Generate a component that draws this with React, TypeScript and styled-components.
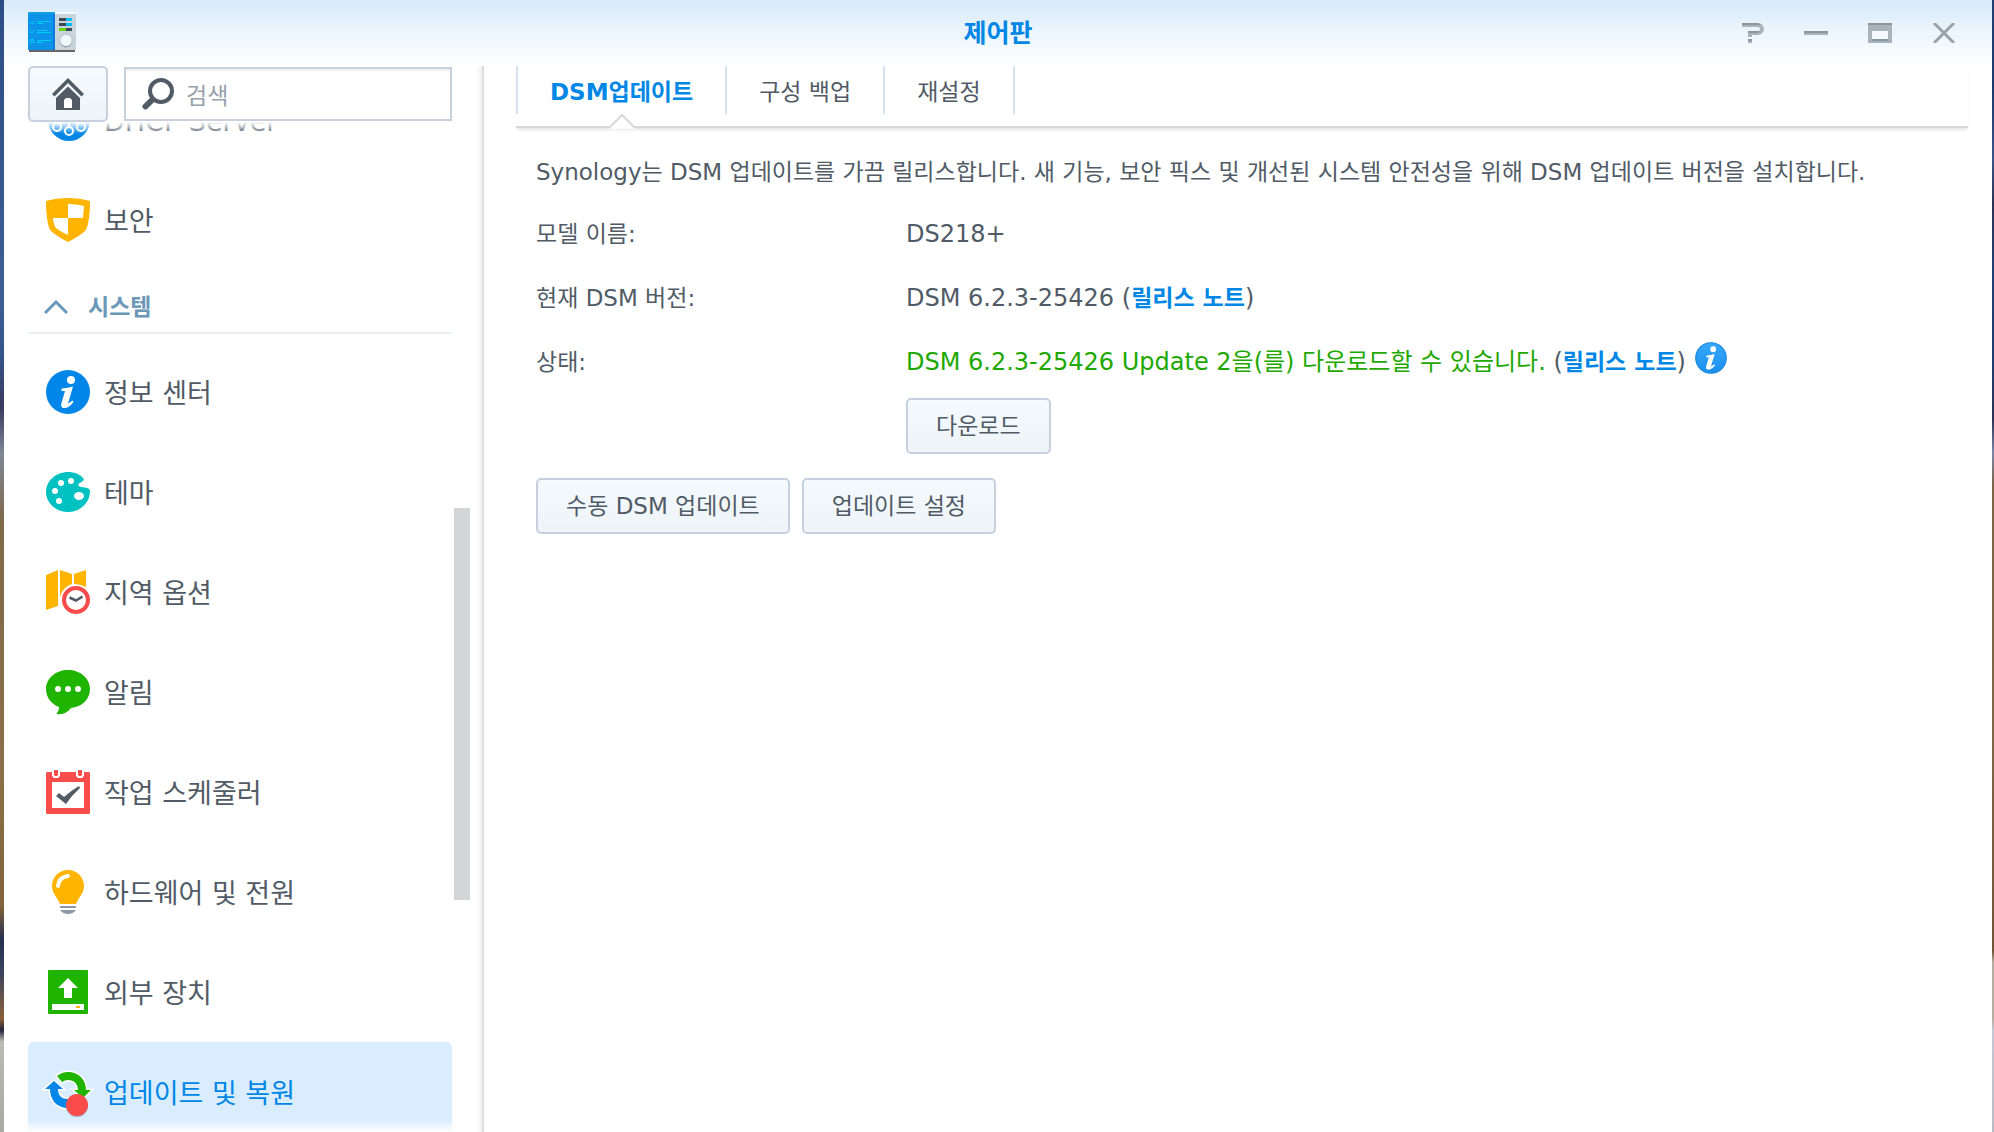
import React from 'react';
import styled, { createGlobalStyle, css } from 'styled-components';

const color = {
  text: '#505b66',
  blue: '#0086e5',
  green: '#1ea800',
  border: '#c6d1dd',
  tabLine: '#d7e1eb',
  group: '#6b97b8',
  amber: '#ffb400',
  red: '#fb4c4c',
  leaf: '#1fb400',
};

const GlobalStyle = createGlobalStyle`
  * { box-sizing: border-box; }
  body {
    margin: 0;
    color: ${color.text};
    font: 23px/32px "DejaVu Sans", "Noto Sans CJK KR", sans-serif;
  }
  button, input { font: inherit; color: inherit; }
`;

const Desktop = styled.div`
  display: flex;
  height: 100vh;
  padding: 0 2px 0 4px;
  overflow: hidden;
  background:
    linear-gradient(#213f70 0%, #1c3a6c 8%, #3a5488 14%, #2c3352 18%, #1f4072 24%, #1f3d6e 32%, #2c3352 37%,
      #7c86a8 40%, #7a6244 43%, #7d6547 65%, #6f5636 84%, #b4aea2 85%, #b4aea2 90%, #c5c8d4 91%, #b8bac4 100%)
      right / 2px 100% no-repeat,
    linear-gradient(#2c4d85 0%, #3c5f96 26%, #34568c 31%, #3b3a60 36%, #7d8796 40%, #80694b 46%,
      #8a7048 68%, #84643a 80%, #253052 83%, #3c4560 86%, #8a5f35 90%, #23233c 91%, #b9bbb4 92%, #a9aaa2 100%);
`;

const Window = styled.section`
  flex: 1;
  min-width: 0;
  display: flex;
  flex-direction: column;
  background: linear-gradient(#d7eaf8 0, #e9f4fd 28px, #fff 66px);
`;

const TitleBar = styled.header`
  display: grid;
  grid-template-columns: 1fr auto 1fr;
  align-items: center;
  height: 66px;
  padding: 0 24px;
`;

const Title = styled.h1`
  margin: 0;
  padding-top: 2px;
  color: ${color.blue};
  font-size: 25px;
  line-height: 32px;
`;

const WindowControls = styled.div`
  display: flex;
  justify-content: flex-end;
  gap: 40px;
  padding-right: 12px;
`;

const ControlButton = styled.button`
  display: flex;
  padding: 0;
  border: 0;
  background: none;
`;

const Body = styled.div`
  flex: 1;
  min-height: 0;
  display: flex;
`;

const Sidebar = styled.aside`
  flex: 0 0 480px;
  min-width: 0;
  display: flex;
  flex-direction: column;
  border-right: 2px solid #dedede;
  background: linear-gradient(to left, #f1f1f1, #fff 6px);
`;

const SearchRow = styled.div`
  display: flex;
  align-items: center;
  gap: 16px;
  padding: 0 30px 0 24px;
`;

const raised = css`
  border: 2px solid ${color.border};
  border-radius: 5px;
  background: linear-gradient(#f5fafe, #eef3f8);
`;

const HomeButton = styled.button`
  ${raised}
  flex: none;
  display: flex;
  align-items: center;
  justify-content: center;
  width: 80px;
  height: 56px;
  padding: 0;
`;

const SearchBox = styled.label`
  flex: 1;
  min-width: 0;
  display: flex;
  align-items: center;
  gap: 12px;
  height: 54px;
  padding: 0 16px;
  border: 2px solid ${color.border};
  background: #fff;
  box-shadow: inset 0 2px 0 #f2f2f2;
`;

const SearchInput = styled.input`
  flex: 1;
  min-width: 0;
  padding: 4px 0 0;
  border: 0;
  outline: 0;
  background: none;
  &::placeholder { color: #96a0aa; opacity: 1; }
`;

const ScrollArea = styled.div`
  position: relative;
  flex: 1;
  min-height: 0;
  overflow: hidden;
  padding: 0 30px 0 24px;
  &::before, &::after {
    content: "";
    position: absolute;
    left: 24px;
    right: 30px;
    z-index: 1;
    height: 12px;
  }
  &::before { top: 0; background: linear-gradient(#fff, #fff0); }
  &::after { bottom: 0; background: linear-gradient(#fff0, #fff); }
`;

const ScrollThumb = styled.div`
  position: absolute;
  top: 386px;
  right: 12px;
  width: 16px;
  height: 392px;
  background: #d3d5d7;
`;

const Nav = styled.nav`
  margin-top: -52px;
`;

const NavItem = styled.a<{ $active?: boolean }>`
  display: flex;
  align-items: center;
  gap: 14px;
  height: 100px;
  padding: 0 18px;
  border-radius: 6px;
  background: ${p => (p.$active ? '#d9edff' : 'transparent')};
  color: ${p => (p.$active ? color.blue : 'inherit')};
  font-size: 27px;
  text-decoration: none;
  svg { flex: none; overflow: visible; }
`;

const NavLabel = styled.span`
  padding-top: 4px;
`;

const NavGroup = styled.button`
  display: flex;
  align-items: center;
  gap: 20px;
  width: 100%;
  height: 64px;
  margin-bottom: 8px;
  padding: 12px 16px 0;
  border: 0;
  border-bottom: 2px solid #e9eff4;
  background: none;
  color: ${color.group};
  font-weight: bold;
`;

const Main = styled.main`
  flex: 1;
  min-width: 0;
  padding: 0 24px 0 32px;
`;

const Tabs = styled.div`
  display: flex;
  padding-bottom: 12px;
  border-bottom: 2px solid #d8d8d8;
  box-shadow: 0 3px 3px -1px #0000001a;
`;

const Tab = styled.button<{ $active?: boolean }>`
  position: relative;
  height: 48px;
  padding: 4px 32px 0;
  border: solid ${color.tabLine};
  border-width: 0 2px 0 0;
  background: none;
  line-height: 32px;
  color: ${p => (p.$active ? color.blue : 'inherit')};
  font-weight: ${p => (p.$active ? 'bold' : 'normal')};
  &:first-child { border-left-width: 2px; }
`;

const Notch = styled.svg`
  position: absolute;
  left: calc(50% - 13px);
  top: 100%;
`;

const Content = styled.div`
  padding: 28px 20px;
`;

const Intro = styled.p`
  margin: 0;
`;

const Details = styled.dl`
  display: grid;
  grid-template-columns: 370px 1fr;
  row-gap: 32px;
  margin: 30px 0 24px;
`;

const Term = styled.dt``;

const Value = styled.dd`
  margin: 0;
  font-size: 24px;
`;

const StatusLine = styled.div`
  display: flex;
  align-items: flex-start;
  gap: 9px;
  height: 32px;
  margin-bottom: 20px;
  svg { flex: none; margin-top: -4px; }
`;

const Available = styled.span`
  color: ${color.green};
`;

const NoteLink = styled.a`
  color: ${color.blue};
  font-size: 23px;
  font-weight: bold;
  text-decoration: none;
`;

const Actions = styled.div`
  display: flex;
  gap: 12px;
`;

const PushButton = styled.button`
  ${raised}
  height: 56px;
  padding: 0 28px;
  font-size: 23px;
  line-height: 32px;
`;

const AppIcon = () => (
  <svg width="48" height="42" viewBox="0 0 48 42">
    <path d="M1 38h46v2H1z" fill="#666" />
    <path d="M27 1h20l1 1v36H27z" fill="#c9d4dc" />
    <path d="M27 0h20l1 1v1H27z" fill="#f4f8fa" />
    <path d="M1 0h26v38H0V1z" fill="#0c93e8" />
    <path d="M0 1l1-1h26v2H0z" fill="#159fe6" />
    <path d="M25 2h2v36h-2z" fill="#0b7be0" />
    <path d="M2 10l2 2 3-3M2 19l2 2 3-3M2.500 27.500h3v3h-3zM9 9.500h14M9 11.500h6M9 18.500h10M9 20.500h14M9 28.500h14M9 30.500h6" fill="none" stroke="#00cdf8" />
    <path d="M31 6h7v3h-7zM31 11h7v3h-7zM38 16h6v3h-6z" fill="#3f4a54" />
    <path d="M38 6h6v3h-6zM38 11h6v3h-6z" fill="#00bdfa" />
    <path d="M31 16h7v3h-7z" fill="#66d400" />
    <circle cx="38" cy="29.500" r="5.500" fill="#8c979f" />
    <circle cx="38" cy="28.500" r="5.500" fill="#eef9fd" />
    <circle cx="38" cy="28.500" r="7" fill="none" stroke="#aab6bf" strokeDasharray="1 2" />
  </svg>
);

const HomeIcon = () => (
  <svg width="32" height="32" viewBox="0 0 32 32" fill={color.text}>
    <path d="M16 0L32 16l-2.500 2.500L16 5 2.500 18.500 0 16z" />
    <path d="M16 8.500L28 20v12H4V20z" />
    <path d="M12 30v-8l2-2h4l2 2v8z" fill="#fff" />
  </svg>
);

const SearchIcon = () => (
  <svg width="32" height="32" viewBox="0 0 32 32" fill="none" stroke={color.text}>
    <circle cx="19" cy="13" r="11" strokeWidth="4" />
    <path d="M12 20l-3 3" strokeWidth="4" />
    <path d="M9.500 22.500L3.500 28.500" strokeWidth="6" strokeLinecap="round" />
  </svg>
);

const DhcpIcon = () => (
  <svg width="44" height="44" viewBox="0 0 44 44">
    <circle cx="23" cy="22" r="21" fill="#0086e5" />
    <g fill="none" stroke="#fff" strokeWidth="2">
      <circle cx="11" cy="29" r="4" /><circle cx="23" cy="33" r="4" /><circle cx="35" cy="29" r="4" />
      <path d="M23 29V20M14 26l9-8 9 8" />
    </g>
  </svg>
);

const ShieldIcon = () => (
  <svg width="44" height="44" viewBox="0 0 44 44">
    <path d="M0 3Q10 0 22 0t22 3q0 20-4 29Q34 38 22 44 10 38 4 32 0 23 0 3z" fill={color.amber} />
    <path d="M22 6q9 0 16 2l-1 12H22v17Q13 33 9 29q-2-5-2-9h15z" fill="#fff" />
  </svg>
);

const ItalicI = () => (
  <g fill="#fff">
    <circle cx="25" cy="10" r="4" />
    <path d="M16 18.500q6-.5 11-2l-5 17q2-1 4.500-3l1 1.500Q23 38 18.500 38c-3 0-4-2-3-5l3.500-12h-4z" />
  </g>
);

const InfoIcon = () => (
  <svg width="44" height="44" viewBox="0 0 44 44">
    <circle cx="22" cy="22" r="22" fill="#0086e8" />
    <ItalicI />
  </svg>
);

const InfoBadge = () => (
  <svg width="32" height="32" viewBox="0 0 44 44">
    <defs>
      <linearGradient id="badge" x2="0" y2="1">
        <stop stopColor="#36a8fb" /><stop offset="1" stopColor="#1a8fec" />
      </linearGradient>
    </defs>
    <circle cx="22" cy="22" r="21" fill="url(#badge)" stroke="#1787dd" strokeWidth="1.500" />
    <ItalicI />
  </svg>
);

const ThemeIcon = () => (
  <svg width="44" height="44" viewBox="0 0 44 44">
    <path d="M22 2c6 0 12 2 15.500 6.500 1 2-1 3-4 4.500-2.500 2-1 3.500 2 4 4 .5 8.500 1 8.500 4C44 33 34 42 22 42S0 33 0 22 10 2 22 2z" fill="#00c1c1" />
    <g fill="#fff">
      <circle cx="15" cy="13" r="3" /><circle cx="25" cy="11" r="3" />
      <circle cx="9" cy="21" r="3" /><circle cx="13" cy="31" r="3" />
      <ellipse cx="33" cy="26" rx="5" ry="4" />
    </g>
  </svg>
);

const RegionIcon = () => (
  <svg width="44" height="44" viewBox="0 0 44 44">
    <path d="M0 5L12 0v36L0 40zM14 0l12 4v10c-6 2-11 7-12 14zM28 4l12-4v17q-6-3-12-3z" fill={color.amber} />
    <circle cx="30" cy="30" r="12" fill="#fff" stroke={color.red} strokeWidth="4" />
    <path d="M23.500 27.500L30 30.500l6.500-4" fill="none" stroke={color.text} strokeWidth="2.500" />
  </svg>
);

const NotifyIcon = () => (
  <svg width="44" height="44" viewBox="0 0 44 44">
    <path d="M22 0c12 0 22 8 22 19 0 10-8 18-19 19-3 4-8 7-14 6-1-1 2-2 2-7C5 34 0 27 0 19 0 8 10 0 22 0z" fill={color.leaf} />
    <g fill="#fff"><circle cx="12" cy="19" r="3" /><circle cx="22" cy="19" r="3" /><circle cx="32" cy="19" r="3" /></g>
  </svg>
);

const TaskIcon = () => (
  <svg width="44" height="44" viewBox="0 0 44 44">
    <path d="M1 2h42l1 1v40l-1 1H1l-1-1V3z" fill={color.red} />
    <path d="M6 12h32v26H6z" fill="#fff" />
    <path d="M6 1h8v5l-2 2H8L6 6zM30 1h8v5l-2 2h-4l-2-2z" fill="#fff" />
    <path d="M8 0h4v5l-1 1H9L8 5zM32 0h4v5l-1 1h-2l-1-1z" fill={color.red} />
    <path d="M10 26l3-3 5 4q8-7 15-11l1 2q-8 7-14 16z" fill={color.text} />
  </svg>
);

const PowerIcon = () => (
  <svg width="44" height="44" viewBox="0 0 44 44">
    <path d="M22 0c9 0 16 7 16 16 0 8-5 10-8 18H14C11 26 6 24 6 16 6 7 13 0 22 0z" fill={color.amber} />
    <path d="M12 16q1-9 10-10" fill="none" stroke="#fff" strokeWidth="4" strokeLinecap="round" />
    <path d="M14 36h16v2H14zM14 40h16q-3 4-8 4t-8-4z" fill="#8d99a5" />
  </svg>
);

const DeviceIcon = () => (
  <svg width="44" height="44" viewBox="0 0 44 44">
    <rect x="2" width="40" height="44" rx="1" fill={color.leaf} />
    <path d="M22 8l10 10h-6v10h-8V18h-6zM6 34h32v6H6z" fill="#fff" />
    <path d="M30 36h4v2h-4z" fill={color.amber} />
  </svg>
);

const UpdateIcon = () => (
  <svg width="44" height="44" viewBox="0 0 44 44">
    <g stroke="#fff" strokeWidth="3" paintOrder="stroke">
      <path d="M11 6Q16 2 22 2c11 0 18 8 18 18h5l-8 8-9-8h4c0-6-4-10-10-10q-3 0-6 2z" fill={color.leaf} />
      <path d="M8 11l9 8h-5c0 7 4 10 10 10v9C11 38 4 30 4 19h-5z" fill="#0086e8" />
    </g>
    <circle cx="31" cy="36" r="11" fill="#0004" />
    <circle cx="31" cy="35" r="11" fill={color.red} />
  </svg>
);

const network = [
  { label: 'DHCP Server', Icon: DhcpIcon },
  { label: '보안', Icon: ShieldIcon },
];

const system = [
  { label: '정보 센터', Icon: InfoIcon },
  { label: '테마', Icon: ThemeIcon },
  { label: '지역 옵션', Icon: RegionIcon },
  { label: '알림', Icon: NotifyIcon },
  { label: '작업 스케줄러', Icon: TaskIcon },
  { label: '하드웨어 및 전원', Icon: PowerIcon },
  { label: '외부 장치', Icon: DeviceIcon },
  { label: '업데이트 및 복원', Icon: UpdateIcon, active: true },
];

const controls = [
  {
    name: '도움말',
    art: (
      <>
        <path d="M2 2h16a4 4 0 0 1 0 8h-8v4" fill="none" stroke="#a9b3bb" strokeWidth="4" />
        <path d="M2 0h16l3 2H2zM8 8h11l-1 2H8zM8 16h4v2H8z" fill="#8b959e" />
        <path d="M8 18h4v2H8z" fill="#a9b3bb" />
      </>
    ),
  },
  { name: '최소화', art: <><path d="M0 8h24v4H0z" fill="#a9b3bb" /><path d="M0 8h24v2H0z" fill="#8b959e" /></> },
  {
    name: '최대화',
    art: (
      <>
        <path d="M0 0h24v20H0z" fill="#a9b3bb" />
        <path d="M0 0h24v2H0zM4 16h16v2H4z" fill="#8b959e" />
        <path d="M4 8h16v8H4z" fill="#f3f9fe" />
      </>
    ),
  },
  { name: '닫기', art: <path d="M2 0l20 20M22 0L2 20" stroke="#99a3ab" strokeWidth="3" /> },
];

const tabs = ['DSM업데이트', '구성 백업', '재설정'];

export default function App() {
  return (
    <>
      <GlobalStyle />
      <Desktop>
        <Window>
          <TitleBar>
            <AppIcon />
            <Title>제어판</Title>
            <WindowControls>
              {controls.map(c => (
                <ControlButton key={c.name} aria-label={c.name}>
                  <svg width="24" height="20" viewBox="0 0 24 20">{c.art}</svg>
                </ControlButton>
              ))}
            </WindowControls>
          </TitleBar>
          <Body>
            <Sidebar>
              <SearchRow>
                <HomeButton aria-label="홈"><HomeIcon /></HomeButton>
                <SearchBox>
                  <SearchIcon />
                  <SearchInput type="text" aria-label="검색" placeholder="검색" />
                </SearchBox>
              </SearchRow>
              <ScrollArea>
                <Nav>
                  {network.map(({ label, Icon }) => (
                    <NavItem key={label} href="#"><Icon /><NavLabel>{label}</NavLabel></NavItem>
                  ))}
                  <NavGroup aria-expanded="true">
                    <svg width="24" height="14" viewBox="0 0 24 14">
                      <path d="M1 13L12 2l11 11" fill="none" stroke={color.group} strokeWidth="3" />
                    </svg>
                    시스템
                  </NavGroup>
                  {system.map(({ label, Icon, active }) => (
                    <NavItem key={label} href="#" $active={active}><Icon /><NavLabel>{label}</NavLabel></NavItem>
                  ))}
                </Nav>
                <ScrollThumb />
              </ScrollArea>
            </Sidebar>
            <Main>
              <Tabs role="tablist">
                {tabs.map((label, i) => (
                  <Tab key={label} role="tab" aria-selected={i === 0} $active={i === 0}>
                    {label}
                    {i === 0 && (
                      <Notch width="26" height="15" viewBox="0 0 26 15">
                        <path d="M1 15V13L13 1l12 12v2z" fill="#fff" />
                        <path d="M0 13h1L13 1l12 12h1" fill="none" stroke="#d8d8d8" strokeWidth="2" />
                      </Notch>
                    )}
                  </Tab>
                ))}
              </Tabs>
              <Content>
                <Intro>
                  Synology는 DSM 업데이트를 가끔 릴리스합니다. 새 기능, 보안 픽스 및 개선된 시스템 안전성을 위해 DSM 업데이트 버전을 설치합니다.
                </Intro>
                <Details>
                  <Term>모델 이름:</Term>
                  <Value>DS218+</Value>
                  <Term>현재 DSM 버전:</Term>
                  <Value>DSM 6.2.3-25426 (<NoteLink href="#">릴리스 노트</NoteLink>)</Value>
                  <Term>상태:</Term>
                  <Value>
                    <StatusLine>
                      <span>
                        <Available>DSM 6.2.3-25426 Update 2을(를) 다운로드할 수 있습니다.</Available>{' '}
                        (<NoteLink href="#">릴리스 노트</NoteLink>)
                      </span>
                      <InfoBadge />
                    </StatusLine>
                    <PushButton>다운로드</PushButton>
                  </Value>
                </Details>
                <Actions>
                  <PushButton>수동 DSM 업데이트</PushButton>
                  <PushButton>업데이트 설정</PushButton>
                </Actions>
              </Content>
            </Main>
          </Body>
        </Window>
      </Desktop>
    </>
  );
}
